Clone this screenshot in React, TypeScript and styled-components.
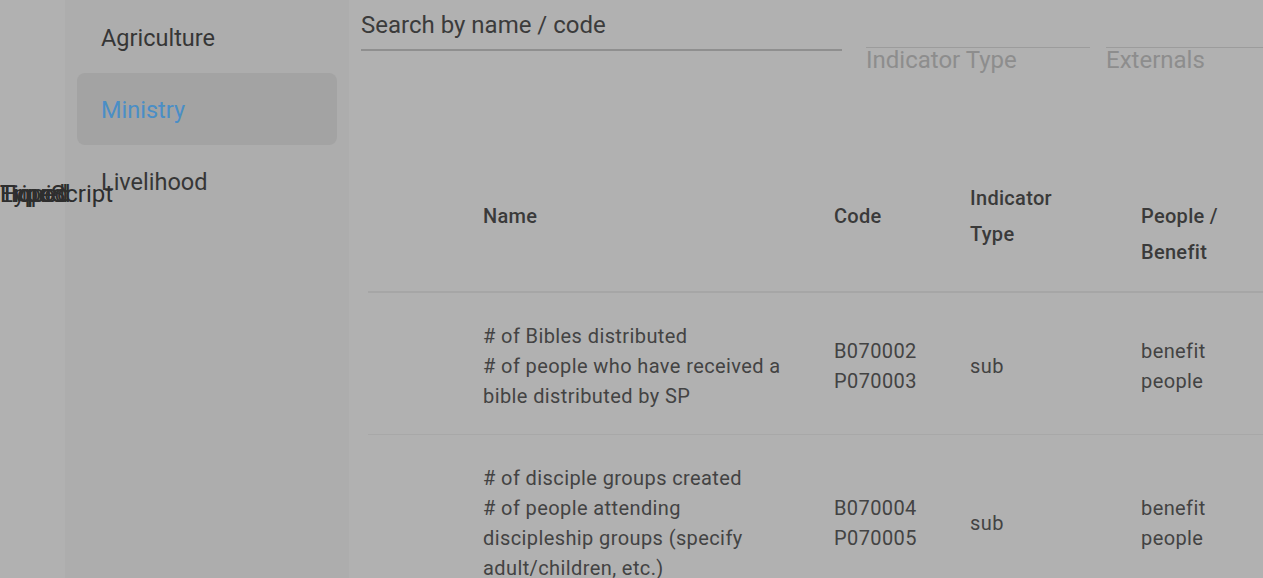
import React from "react";
import styled, { createGlobalStyle } from "styled-components";

const Global = createGlobalStyle`
  html, body {
    margin: 0;
    padding: 0;
    width: 100%;
    height: 100%;
    overflow: hidden;
    background: #b1b1b1;
    font-family: Roboto, "Noto Sans", "Liberation Sans", sans-serif;
  }
  #root { height: 100%; }
`;

const Page = styled.div`
  position: relative;
  display: flex;
  height: 100vh;
  width: 100vw;
  overflow: hidden;
  background: #b1b1b1;
`;

const Rail = styled.div`
  flex: 0 0 65px;
  background: #b1b1b1;
`;

const Sidebar = styled.nav`
  flex: 0 0 284px;
  box-sizing: border-box;
  padding: 1px 12px 0;
  background: #adadad;
  display: flex;
  flex-direction: column;
`;

const NavItem = styled.div<{ $active?: boolean }>`
  height: 72px;
  display: flex;
  align-items: center;
  padding: 2px 0 0 24px;
  box-sizing: border-box;
  border-radius: 8px;
  font-size: 23.5px;
  color: ${(p) => (p.$active ? "#4a8ec6" : "#363636")};
  background: ${(p) => (p.$active ? "#a3a3a3" : "transparent")};
`;

const Main = styled.main`
  flex: 1 1 auto;
  min-width: 0;
  padding-left: 12px;
  overflow: hidden;
`;

const Filters = styled.div`
  display: flex;
  align-items: flex-start;
  height: 74px;
`;

const SearchField = styled.div`
  flex: 0 0 481px;
  height: 48px;
  box-sizing: content-box;
  display: flex;
  align-items: center;
  border-bottom: 2px solid #8f8f8f;
  font-size: 24px;
  color: #3b3b3b;
  margin-top: 1px;
`;

const SelectField = styled.div<{ $gap: number }>`
  flex: 0 0 224px;
  margin-left: ${(p) => p.$gap}px;
  margin-top: 47px;
  border-top: 1px solid #9c9c9c;
  font-size: 24px;
  line-height: 24px;
  color: #8d8d8d;
  white-space: nowrap;
`;

const TableWrap = styled.div`
  margin: 61px 0 0 7px;
`;

const Table = styled.table`
  border-collapse: collapse;
  table-layout: fixed;
  width: 1100px;
`;

const HeadCell = styled.th`
  padding: 27px 16px 21px;
  text-align: left;
  vertical-align: middle;
  font-size: 20px;
  font-weight: 500;
  letter-spacing: 0.3px;
  line-height: 36px;
  color: #3a3a3a;
  border-bottom: 2px solid #a6a6a6;
`;

const HeadLabel = styled.div`
  max-width: 100px;
`;

const HeadSpacer = styled.div`
  height: 36px;
`;

const Row = styled.tr`
  border-bottom: 1px solid #a8a8a8;
`;

const Cell = styled.td`
  padding: 28px 16px 23px;
  vertical-align: middle;
  font-size: 20px;
  letter-spacing: 0.4px;
  line-height: 30px;
  color: #434343;
`;

const NameText = styled.div`
  max-width: 304px;
`;

const Jumble = styled.div`
  position: absolute;
  left: 0;
  top: 181px;
  height: 26px;
  width: 130px;
  font-size: 24px;
  line-height: 26px;
  color: #2e2e2e;
  pointer-events: none;
`;

const JumbleWord = styled.span`
  position: absolute;
  left: 0;
  top: 0;
  white-space: nowrap;
`;

const rows = [
  {
    name: ["# of Bibles distributed", "# of people who have received a bible distributed by SP"],
    codes: ["B070002", "P070003"],
    type: "sub",
    pb: ["benefit", "people"],
  },
  {
    name: [
      "# of disciple groups created",
      "# of people attending discipleship groups (specify adult/children, etc.)",
    ],
    codes: ["B070004", "P070005"],
    type: "sub",
    pb: ["benefit", "people"],
  },
];

export default function App() {
  return (
    <>
      <Global />
      <Page>
        <Rail />
        <Sidebar>
          <NavItem>Agriculture</NavItem>
          <NavItem $active>Ministry</NavItem>
          <NavItem>Livelihood</NavItem>
        </Sidebar>
        <Main>
          <Filters>
            <SearchField>Search by name / code</SearchField>
            <SelectField $gap={24}>Indicator Type</SelectField>
            <SelectField $gap={16}>Externals</SelectField>
          </Filters>
          <TableWrap>
            <Table>
              <colgroup>
                <col style={{ width: 99 }} />
                <col style={{ width: 351 }} />
                <col style={{ width: 136 }} />
                <col style={{ width: 171 }} />
                <col style={{ width: 150 }} />
                <col />
              </colgroup>
              <thead>
                <tr>
                  <HeadCell />
                  <HeadCell>
                    <HeadLabel>Name</HeadLabel>
                  </HeadCell>
                  <HeadCell>
                    <HeadLabel>Code</HeadLabel>
                  </HeadCell>
                  <HeadCell>
                    <HeadLabel>Indicator Type</HeadLabel>
                  </HeadCell>
                  <HeadCell>
                    <HeadSpacer />
                    <HeadLabel>People / Benefit</HeadLabel>
                  </HeadCell>
                  <HeadCell />
                </tr>
              </thead>
              <tbody>
                {rows.map((r, i) => (
                  <Row key={i}>
                    <Cell />
                    <Cell>
                      {r.name.map((n) => (
                        <NameText key={n}>{n}</NameText>
                      ))}
                    </Cell>
                    <Cell>
                      {r.codes.map((c) => (
                        <div key={c}>{c}</div>
                      ))}
                    </Cell>
                    <Cell>{r.type}</Cell>
                    <Cell>
                      {r.pb.map((p) => (
                        <div key={p}>{p}</div>
                      ))}
                    </Cell>
                    <Cell />
                  </Row>
                ))}
              </tbody>
            </Table>
          </TableWrap>
        </Main>
        <Jumble aria-hidden>
          <JumbleWord>TypeScript</JumbleWord>
          <JumbleWord>Liquid</JumbleWord>
          <JumbleWord>Hoped</JumbleWord>
          <JumbleWord>Tripod</JumbleWord>
        </Jumble>
      </Page>
    </>
  );
}
